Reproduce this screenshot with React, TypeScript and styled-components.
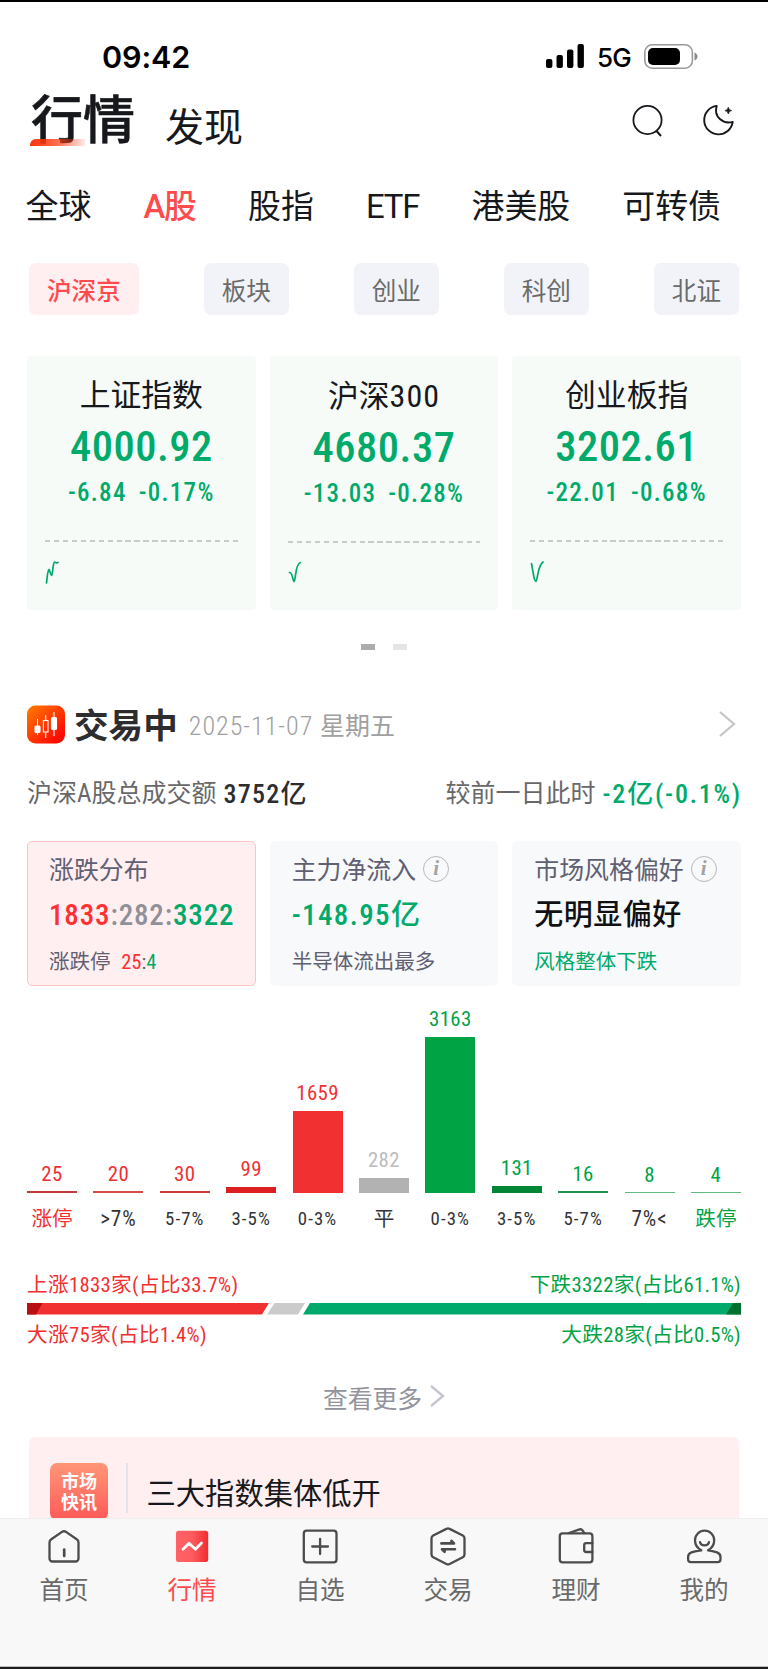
import React from "react";
import styled, { createGlobalStyle, css } from "styled-components";

const RED = "#ff4b4e";
const GREEN = "#00aa6b";
const CHART_RED = "#f13032";
const CHART_GREEN = "#00a344";

const GlobalStyle = createGlobalStyle`
  * { box-sizing: border-box; }
  body {
    margin: 0;
    background: #fff;
    color: #17181c;
    font-family: "Roboto Condensed", "Noto Sans CJK SC", sans-serif;
    font-stretch: 75%;
  }
`;

const Screen = styled.div`
  width: 768px;
  height: 1669px;
  display: flex;
  flex-direction: column;
  overflow: hidden;
  border-top: 2px solid #000;
  white-space: nowrap;
`;

const Content = styled.main`
  flex: 1;
  min-height: 0;
  overflow: hidden;
  display: flex;
  flex-direction: column;
  padding: 0 27px;
`;

/* status bar */
const StatusBar = styled.div`
  margin-top: 34px;
  height: 40px;
  flex: none;
  display: flex;
  align-items: center;
  justify-content: space-between;
  padding: 0 43px 0 75px;
  font-family: Inter, sans-serif;
  color: #000;
`;
const Clock = styled.span`
  font-size: 30.5px;
  font-weight: 600;
  letter-spacing: -0.1px;
`;
const StatusRight = styled.div`
  display: flex;
  align-items: center;
`;
const Network = styled.span`
  margin: 2px 13px 0 13px;
  font-size: 26px;
  font-weight: 500;
  letter-spacing: -0.8px;
`;

/* page header */
const Header = styled.header`
  margin-top: 8px;
  height: 70px;
  flex: none;
  display: flex;
  align-items: center;
  padding: 0 7px 0 4px;
`;
const HeaderTitle = styled.h1`
  position: relative;
  margin: 5px 0 0;
  font-size: 52px;
  line-height: 60px;
  font-weight: 500;
  -webkit-text-stroke: 0.6px currentColor;
  &::after {
    content: "";
    position: absolute;
    left: -1px;
    top: 47px;
    width: 55px;
    height: 7px;
    border-radius: 6px 0 0 0;
    background: linear-gradient(90deg, #fc3008, rgba(252, 60, 20, 0.75) 50%, rgba(255, 90, 70, 0.12));
  }
`;
const HeaderLink = styled.span`
  margin: 17px auto 0 30px;
  font-size: 39px;
  line-height: 48px;
`;
const HeaderIcons = styled.div`
  display: flex;
  gap: 38px;
  margin-top: 4px;
`;

const CategoryTabs = styled.nav`
  margin: 31px 20px 0 -1.5px;
  height: 44px;
  flex: none;
  display: flex;
  align-items: center;
  justify-content: space-between;
`;
const CategoryTab = styled.span<{ $active?: boolean; $latin?: boolean }>`
  font-size: 32.9px;
  line-height: 44px;
  color: ${(p) => (p.$active ? RED : "#17181c")};
  font-weight: ${(p) => (p.$active ? 500 : 400)};
  font-family: Roboto, "Noto Sans CJK SC", sans-serif;
  font-stretch: 100%;
  letter-spacing: ${(p) => (p.$latin ? -1.1 : 0)}px;
`;

const ChipRow = styled.div`
  margin: 34px 2px 0;
  height: 52px;
  flex: none;
  display: flex;
  justify-content: space-between;
`;
const Chip = styled.span<{ $active?: boolean }>`
  padding: 0 18px;
  border-radius: 7px;
  font-size: 24.6px;
  line-height: 57px;
  color: ${(p) => (p.$active ? RED : "#6b6b6b")};
  font-weight: ${(p) => (p.$active ? 500 : 400)};
  background: ${(p) => (p.$active ? "#ffeff0" : "#f2f3f9")};
`;

/* index cards */
const CardGrid = styled.div<{ $top: number; $height: number }>`
  margin-top: ${(p) => p.$top}px;
  height: ${(p) => p.$height}px;
  flex: none;
  display: grid;
  grid-template-columns: repeat(3, 1fr);
  gap: 14px;
`;
const IndexCard = styled.article`
  border-radius: 4px;
  background: #f6fbf8;
  padding: 20px 18px 0;
  text-align: center;
  color: ${GREEN};
`;
const IndexName = styled.div`
  font-size: 30.8px;
  line-height: 40px;
  color: #17181c;
  & span {
    font-size: 32px;
    letter-spacing: 1px;
  }
`;
const IndexPrice = styled.div`
  margin-top: 7px;
  font-size: 42.5px;
  line-height: 48px;
  font-weight: 500;
  letter-spacing: 0.5px;
`;
const IndexChange = styled.div`
  margin-top: 7px;
  display: flex;
  justify-content: center;
  gap: 12px;
  font-size: 25px;
  line-height: 30px;
  font-weight: 500;
  letter-spacing: 1.3px;
`;
const DashedRule = styled.div`
  margin-top: 32px;
  height: 2px;
  background: repeating-linear-gradient(90deg, #c9cbca 0 5.4px, transparent 5.4px 8.94px);
`;
const Spark = styled.svg`
  display: block;
  margin-top: 15px;
`;

const Pager = styled.div`
  margin-top: 34px;
  height: 6px;
  flex: none;
  display: flex;
  justify-content: center;
  gap: 18px;
`;
const PagerDot = styled.i<{ $on?: boolean }>`
  width: 14px;
  background: ${(p) => (p.$on ? "#acacac" : "#e5e5e5")};
`;

/* trading section */
const SectionHead = styled.div`
  margin-top: 54px;
  height: 40px;
  flex: none;
  display: flex;
  align-items: center;
  padding-right: 5px;
`;
const SectionTitle = styled.h2`
  margin: 4px 11px 0 9px;
  font-size: 34.6px;
  line-height: 40px;
  font-weight: 700;
  color: #2d2d2f;
`;
const SectionDate = styled.span`
  margin: 4px auto 0 0;
  font-size: 25px;
  line-height: 30px;
  color: #a0a0a0;
  & span {
    margin-right: 1px;
    font-size: 26px;
    font-weight: 300;
    letter-spacing: 1px;
  }
`;
const TurnoverRow = styled.div`
  margin-top: 34px;
  height: 32px;
  flex: none;
  display: flex;
  align-items: center;
  justify-content: space-between;
  font-size: 25px;
  line-height: 32px;
  color: #68686a;
  & > span { display: flex; gap: 7px; }
`;
const TurnoverValue = styled.b<{ $down?: boolean }>`
  font-weight: 500;
  font-size: 26px;
  letter-spacing: ${(p) => (p.$down ? 1.8 : 1.3)}px;
  margin-right: ${(p) => (p.$down ? -1 : 0)}px;
  color: ${(p) => (p.$down ? GREEN : "#2d2d2f")};
`;

const StatCard = styled.article<{ $active?: boolean }>`
  border-radius: 5px;
  border: 1.5px solid ${(p) => (p.$active ? "#fdc6bd" : "#f8f9fb")};
  background: ${(p) => (p.$active ? "#ffeff0" : "#f8f9fb")};
  padding: 13px 0 0 21px;
`;
const StatLabel = styled.div`
  display: flex;
  align-items: center;
  gap: 7px;
  font-size: 24.9px;
  line-height: 34px;
  height: 32px;
  color: #5f6072;
`;
const InfoMark = styled.i`
  width: 26px;
  height: 26px;
  margin-top: -4px;
  border: 1.3px solid #b9b9b9;
  border-radius: 50%;
  text-align: center;
  font: italic 700 21px/22px "Liberation Serif", serif;
  color: #a3a3a3;
`;
const StatValue = styled.div<{ $tone: string; $track: number }>`
  margin-top: 10px;
  font-size: 29px;
  line-height: 36px;
  font-weight: 500;
  letter-spacing: ${(p) => p.$track}px;
  color: ${(p) => p.$tone};
`;
const StatNote = styled.div<{ $tone?: string }>`
  margin-top: 15px;
  font-size: 20.5px;
  line-height: 28px;
  color: ${(p) => p.$tone || "#5f6072"};
`;
const Tone = styled.span<{ $c: string; $ml?: number }>`
  color: ${(p) => p.$c};
  margin-left: ${(p) => p.$ml || 0}px;
`;

/* distribution chart */
const Chart = styled.div`
  height: 206.5px;
  flex: none;
  display: flex;
  justify-content: space-between;
  align-items: flex-end;
`;
const ChartLabels = styled.div`
  margin-top: 11.5px;
  flex: none;
  display: flex;
  justify-content: space-between;
`;
const Column = styled.div<{ $c: string }>`
  width: 50px;
  text-align: center;
  color: ${(p) => p.$c};
  font-size: 20.8px;
  line-height: 20px;
  letter-spacing: 0.4px;
`;
const Bar = styled.div<{ $h: number; $fill: string }>`
  margin-top: ${(p) => (p.$h < 3 ? 7 : 8.5)}px;
  height: ${(p) => p.$h}px;
  background: ${(p) => p.$fill};
`;
const AxisLabel = styled.span<{ $c: string; $size: number }>`
  width: 50px;
  display: flex;
  justify-content: center;
  color: ${(p) => p.$c};
  font-size: ${(p) => p.$size}px;
  line-height: 30px;
  letter-spacing: ${(p) => (p.$size < 20 ? 1.1 : p.$size > 21 ? 0.9 : 0)}px;
`;

const RatioRow = styled.div<{ $top: number }>`
  margin-top: ${(p) => p.$top}px;
  height: 30px;
  flex: none;
  display: flex;
  justify-content: space-between;
  align-items: center;
  font-size: 20.7px;
  line-height: 30px;
  letter-spacing: 0.3px;
`;
const RatioBar = styled.svg`
  display: block;
  flex: none;
  margin-top: 3px;
`;
const More = styled.a`
  margin-top: 32px;
  height: 30px;
  flex: none;
  display: flex;
  justify-content: center;
  align-items: center;
  gap: 8px;
  font-size: 24.8px;
  color: #93939d;
  & svg { margin-top: -3px; }
`;

/* news */
const News = styled.section`
  flex: none;
  margin: 25px 2px 0;
  height: 106px;
  border-radius: 6px;
  background: #ffeff0;
  padding: 26px 21px 0;
  display: flex;
  align-items: flex-start;
`;
const NewsBadge = styled.div`
  width: 58px;
  height: 57px;
  border-radius: 7px;
  padding-top: 9px;
  background: linear-gradient(180deg, #ff9676, #ff5a59);
  color: #fff;
  text-align: center;
  font-size: 18px;
  line-height: 20.5px;
  font-weight: 700;
`;
const NewsDivider = styled.i`
  width: 1.5px;
  height: 50px;
  margin: 0 19px 0 18px;
  background: #dfe4ee;
`;
const NewsTitle = styled.span`
  font-size: 29.3px;
  line-height: 63px;
`;

/* bottom tabs */
const TabBar = styled.nav`
  height: 151px;
  flex: none;
  display: grid;
  grid-template-columns: repeat(6, 1fr);
  background: #f8f8f8;
  border-top: 1px solid #eeeeee;
  border-bottom: 2px solid #1c1c1c;
  box-shadow: inset 0 -1px #bdbdbd;
`;
const Tab = styled.div<{ $active?: boolean }>`
  display: flex;
  flex-direction: column;
  align-items: center;
  padding-top: 7px;
  font-size: 24.6px;
  line-height: 30px;
  color: #6a6a6a;
  ${(p) => p.$active && css`color: ${RED};`}
  & svg { display: block; margin-bottom: 10px; }
`;

const SignalIcon = () => (
  <svg width="38" height="24" viewBox="0 0 38 24" fill="#000">
    <rect x="0" y="15" width="6.4" height="9" rx="2" />
    <rect x="10.5" y="11" width="6.4" height="13" rx="2" />
    <rect x="21" y="5.5" width="6.4" height="18.5" rx="2" />
    <rect x="31.5" y="0" width="6.4" height="24" rx="2" />
  </svg>
);
const BatteryIcon = () => (
  <svg width="54" height="25" viewBox="0 0 54 25">
    <rect x="0.8" y="0.8" width="47.6" height="23.4" rx="7.5" fill="none" stroke="#9a9a9a" strokeWidth="1.6" />
    <rect x="4" y="4" width="32" height="17" rx="5" fill="#000" />
    <path d="M50.5 8.5c4 1.5 4 6.500 0 8z" fill="#8a8a8a" />
  </svg>
);
const SearchIcon = () => (
  <svg width="32" height="34" viewBox="0 0 32 34" fill="none" stroke="#17181c" strokeWidth="1.8">
    <circle cx="15.5" cy="16" r="14.1" />
    <path d="M24 26.5l5 5.5" strokeWidth="2" />
  </svg>
);
const MoonIcon = () => (
  <svg width="32" height="34" viewBox="0 0 32 34" fill="none" stroke="#17181c" strokeWidth="1.9" strokeLinejoin="round">
    <path d="M14.7 1.9A14.3 14.3 0 1 0 30.7 17.9C21 20.5 11.5 13 14.7 1.9z" />
    <path d="M26.3 3.2q.5 2.9 3.4 3.4q-2.9.5-3.4 3.4q-.5-2.9-3.4-3.4q2.9-.5 3.4-3.4z" fill="#17181c" strokeWidth="0.6" />
  </svg>
);
const CandleIcon = () => (
  <svg width="38" height="39" viewBox="0 0 38 39">
    <defs>
      <linearGradient id="candle" x1="0" y1="0" x2="1" y2="1">
        <stop offset="0" stopColor="#ff7d00" />
        <stop offset="0.85" stopColor="#ff0a00" />
      </linearGradient>
    </defs>
    <rect y="0.5" width="38" height="38" rx="8.5" fill="url(#candle)" />
    <g stroke="#fff" strokeWidth="1.1">
      <path d="M10.5 14v16M18.7 10v6M18.7 27v6M27 7v24" />
      <rect x="8" y="21" width="5" height="6.5" rx="1" fill="#fff" />
      <rect x="16.4" y="15.5" width="4.6" height="11.5" fill="none" />
      <rect x="24.5" y="12.5" width="5" height="12" rx="1" fill="#fff" />
    </g>
  </svg>
);
const Chevron = ({ w, h, color }: { w: number; h: number; color: string }) => (
  <svg width={w} height={h} viewBox={`0 0 ${w} ${h}`} fill="none" stroke={color} strokeWidth="2.3">
    <path d={`M1 1L${w - 2} ${h / 2}L1 ${h - 1}`} />
  </svg>
);

const TabIcon = ({ children }: { children: React.ReactNode }) => (
  <svg width="40" height="40" viewBox="0 0 40 40" fill="none" stroke="#4c4c4c" strokeWidth="2.3" strokeLinecap="round" strokeLinejoin="round">
    {children}
  </svg>
);
const tabs: { label: string; active?: boolean; icon: React.ReactNode }[] = [
  {
    label: "首页",
    icon: (
      <TabIcon>
        <path d="M8.5 35.5h23a3 3 0 0 0 3-3V16.5a4 4 0 0 0-1.800-3.300L22 5.900a3.500 3.500 0 0 0-4 0L7.300 13.200a4 4 0 0 0-1.800 3.300v16a3 3 0 0 0 3 3z" />
        <path d="M20.2 23.500v6.500" strokeWidth="2.700" />
      </TabIcon>
    ),
  },
  {
    label: "行情",
    active: true,
    icon: (
      <TabIcon>
        <defs>
          <linearGradient id="quote" x1="0" x2="1" y1="0" y2="0">
            <stop offset="0" stopColor="#ff6365" />
            <stop offset="0.5" stopColor="#fd5c5f" />
            <stop offset="1" stopColor="#f12d30" />
          </linearGradient>
        </defs>
        <rect x="4" y="4.700" width="32.200" height="31.300" rx="2.500" fill="url(#quote)" stroke="none" />
        <path d="M11 23.200l6-6 6.500 6 6-6.200" stroke="#fff" strokeWidth="2.700" />
      </TabIcon>
    ),
  },
  {
    label: "自选",
    icon: (
      <TabIcon>
        <rect x="3.800" y="4.600" width="32.700" height="31.700" rx="2.800" />
        <path d="M12.200 20.500h15.800M20.100 13v15" />
      </TabIcon>
    ),
  },
  {
    label: "交易",
    icon: (
      <TabIcon>
        <path d="M18.400 2.900a3.200 3.200 0 0 1 3.200 0l13.200 6.600a3.200 3.200 0 0 1 1.700 2.800v16.200a3.200 3.200 0 0 1-1.700 2.800l-13.200 6.700a3.200 3.200 0 0 1-3.200 0L5.200 31.300a3.200 3.200 0 0 1-1.700-2.800V12.300a3.200 3.200 0 0 1 1.700-2.800z" />
        <path d="M13.400 17.400H26l-2.500-2.600v2.600M27 23.300H14l2.600 2.600v-2.600" strokeWidth="2.600" />
      </TabIcon>
    ),
  },
  {
    label: "理财",
    icon: (
      <TabIcon>
        <rect x="3.800" y="7.300" width="32.600" height="29" rx="2.800" />
        <path d="M13 7l10.500-3.600a2.600 2.600 0 0 1 3 1L28.200 7" />
        <path d="M36.400 17.200h-6.200a2 2 0 0 0-2 2v4.800a2 2 0 0 0 2 2h6.200" />
      </TabIcon>
    ),
  },
  {
    label: "我的",
    icon: (
      <TabIcon>
        <path d="M17.300 24.300C13 22 11 18.600 11 14.300a9.600 9.600 0 0 1 19.200 0C30.200 18.600 28.200 22 24 24.300c3 .3 6 1 9 2c2.200.8 3.500 2.200 3.500 4.600v2.400a2.800 2.800 0 0 1-2.800 2.800H6.900a2.800 2.800 0 0 1-2.800-2.800v-2.400c0-2.400 1.200-3.800 3.400-4.600c3-1 6.500-1.700 9.800-2z" />
        <path d="M16 16.200c1 4.200 8 4.200 9 0" />
      </TabIcon>
    ),
  },
];

const indices = [
  { name: "上证指数", num: "", price: "4000.92", diff: "-6.84", pct: "-0.17%", spark: "M1.500 26C2.500 18 2.500 14 4 12.500C5 13 5.500 18.500 6.500 18.500C8 17.500 7.500 7 9.500 5C10.500 5 11 6.500 13 5.500" },
  { name: "沪深", num: "300", price: "4680.37", diff: "-13.03", pct: "-0.28%", spark: "M1.500 14.500C4.500 14 4.500 22 6 23.500C8 22 7 6 12.500 4.500" },
  { name: "创业板指", num: "", price: "3202.61", diff: "-22.01", pct: "-0.68%", spark: "M1.500 6.500C3.500 17 4 24.500 6 24.300C8 22 7.500 9 13 5" },
];

const bars = [
  { v: 25, h: 2, fill: "#c43a3c", c: CHART_RED, label: "涨停", lc: CHART_RED },
  { v: 20, h: 1.3, fill: "#d6484a", c: CHART_RED, label: ">7%" },
  { v: 30, h: 2, fill: "#cf3a3c", c: CHART_RED, label: "5-7%" },
  { v: 99, h: 5.5, fill: "#dd1f20", c: CHART_RED, label: "3-5%" },
  { v: 1659, h: 81.5, fill: CHART_RED, c: CHART_RED, label: "0-3%" },
  { v: 282, h: 14.5, fill: "#b2b2b2", c: "#bcbcbc", label: "平" },
  { v: 3163, h: 155.5, fill: CHART_GREEN, c: CHART_GREEN, label: "0-3%" },
  { v: 131, h: 6.5, fill: "#008636", c: CHART_GREEN, label: "3-5%" },
  { v: 16, h: 1.5, fill: "#1f9350", c: CHART_GREEN, label: "5-7%" },
  { v: 8, h: 1, fill: "#64b983", c: CHART_GREEN, label: "7%<" },
  { v: 4, h: 1, fill: "#64b983", c: CHART_GREEN, label: "跌停", lc: CHART_GREEN },
];

const labelSize = (s: string) => (s.includes("-") ? 18.8 : s.includes("%") ? 21.2 : 20.6);

export default function App() {
  return (
    <Screen>
      <GlobalStyle />
      <Content>
        <StatusBar>
          <Clock>09:42</Clock>
          <StatusRight>
            <SignalIcon />
            <Network>5G</Network>
            <BatteryIcon />
          </StatusRight>
        </StatusBar>
        <Header>
          <HeaderTitle>行情</HeaderTitle>
          <HeaderLink>发现</HeaderLink>
          <HeaderIcons>
            <SearchIcon />
            <MoonIcon />
          </HeaderIcons>
        </Header>
        <CategoryTabs>
          {["全球", "A股", "股指", "ETF", "港美股", "可转债"].map((t) => (
            <CategoryTab key={t} $active={t === "A股"} $latin={/[A-Z]/.test(t)}>{t}</CategoryTab>
          ))}
        </CategoryTabs>
        <ChipRow>
          {["沪深京", "板块", "创业", "科创", "北证"].map((t, i) => (
            <Chip key={t} $active={i === 0}>{t}</Chip>
          ))}
        </ChipRow>
        <CardGrid $top={41} $height={254}>
          {indices.map((x) => (
            <IndexCard key={x.price}>
              <IndexName>{x.name}{x.num && <span>{x.num}</span>}</IndexName>
              <IndexPrice>{x.price}</IndexPrice>
              <IndexChange><span>{x.diff}</span><span>{x.pct}</span></IndexChange>
              <DashedRule />
              <Spark width="16" height="30" viewBox="0 0 16 30" fill="none" stroke={GREEN} strokeWidth="1.7" strokeLinecap="round">
                <path d={x.spark} />
              </Spark>
            </IndexCard>
          ))}
        </CardGrid>
        <Pager><PagerDot $on /><PagerDot /></Pager>

        <SectionHead>
          <CandleIcon />
          <SectionTitle>交易中</SectionTitle>
          <SectionDate><span>2025-11-07</span> 星期五</SectionDate>
          <Chevron w={17} h={26} color="#c6c6c6" />
        </SectionHead>
        <TurnoverRow>
          <span>沪深A股总成交额 <TurnoverValue>3752亿</TurnoverValue></span>
          <span>较前一日此时 <TurnoverValue $down>-2亿(-0.1%)</TurnoverValue></span>
        </TurnoverRow>
        <CardGrid $top={31} $height={145}>
          <StatCard $active>
            <StatLabel>涨跌分布</StatLabel>
            <StatValue $tone="#8f9098" $track={0.85}>
              <Tone $c="#ff2f32">1833</Tone>:282:<Tone $c={GREEN}>3322</Tone>
            </StatValue>
            <StatNote>涨跌停 <Tone $c="#ff2f32" $ml={6}>25</Tone>:<Tone $c={GREEN}>4</Tone></StatNote>
          </StatCard>
          <StatCard>
            <StatLabel>主力净流入<InfoMark>i</InfoMark></StatLabel>
            <StatValue $tone={GREEN} $track={1.4}>-148.95亿</StatValue>
            <StatNote>半导体流出最多</StatNote>
          </StatCard>
          <StatCard>
            <StatLabel>市场风格偏好<InfoMark>i</InfoMark></StatLabel>
            <StatValue $tone="#111114" $track={0.5}>无明显偏好</StatValue>
            <StatNote $tone={GREEN}>风格整体下跌</StatNote>
          </StatCard>
        </CardGrid>

        <Chart>
          {bars.map((b) => (
            <Column key={b.v} $c={b.c}>
              {b.v}
              <Bar $h={b.h} $fill={b.fill} />
            </Column>
          ))}
        </Chart>
        <ChartLabels>
          {bars.map((b) => (
            <AxisLabel key={b.v} $c={b.lc || "#333336"} $size={labelSize(b.label)}>{b.label}</AxisLabel>
          ))}
        </ChartLabels>

        <RatioRow $top={36}>
          <Tone $c={CHART_RED}>上涨1833家(占比33.7%)</Tone>
          <Tone $c={CHART_GREEN}>下跌3322家(占比61.1%)</Tone>
        </RatioRow>
        <RatioBar width="714" height="11.5" viewBox="0 0 714 11.5">
          <path d="M0 0H242L235 11.5H0z" fill={CHART_RED} />
          <path d="M0 0H15.5L9 11.5H0z" fill="#b90f12" />
          <path d="M247.5 0H278L271 11.5H240z" fill="#cbcbcb" />
          <path d="M283 0H714V11.5H276z" fill={GREEN} />
          <path d="M706 0H714V11.5H699z" fill="#00702f" />
        </RatioBar>
        <RatioRow $top={5.5}>
          <Tone $c={CHART_RED}>大涨75家(占比1.4%)</Tone>
          <Tone $c={CHART_GREEN}>大跌28家(占比0.5%)</Tone>
        </RatioRow>
        <More>查看更多<Chevron w={15} h={22} color="#c4c4cc" /></More>
        <News>
          <NewsBadge>市场<br />快讯</NewsBadge>
          <NewsDivider />
          <NewsTitle>三大指数集体低开</NewsTitle>
        </News>
      </Content>
      <TabBar>
        {tabs.map((t) => (
          <Tab key={t.label} $active={t.active}>{t.icon}{t.label}</Tab>
        ))}
      </TabBar>
    </Screen>
  );
}
